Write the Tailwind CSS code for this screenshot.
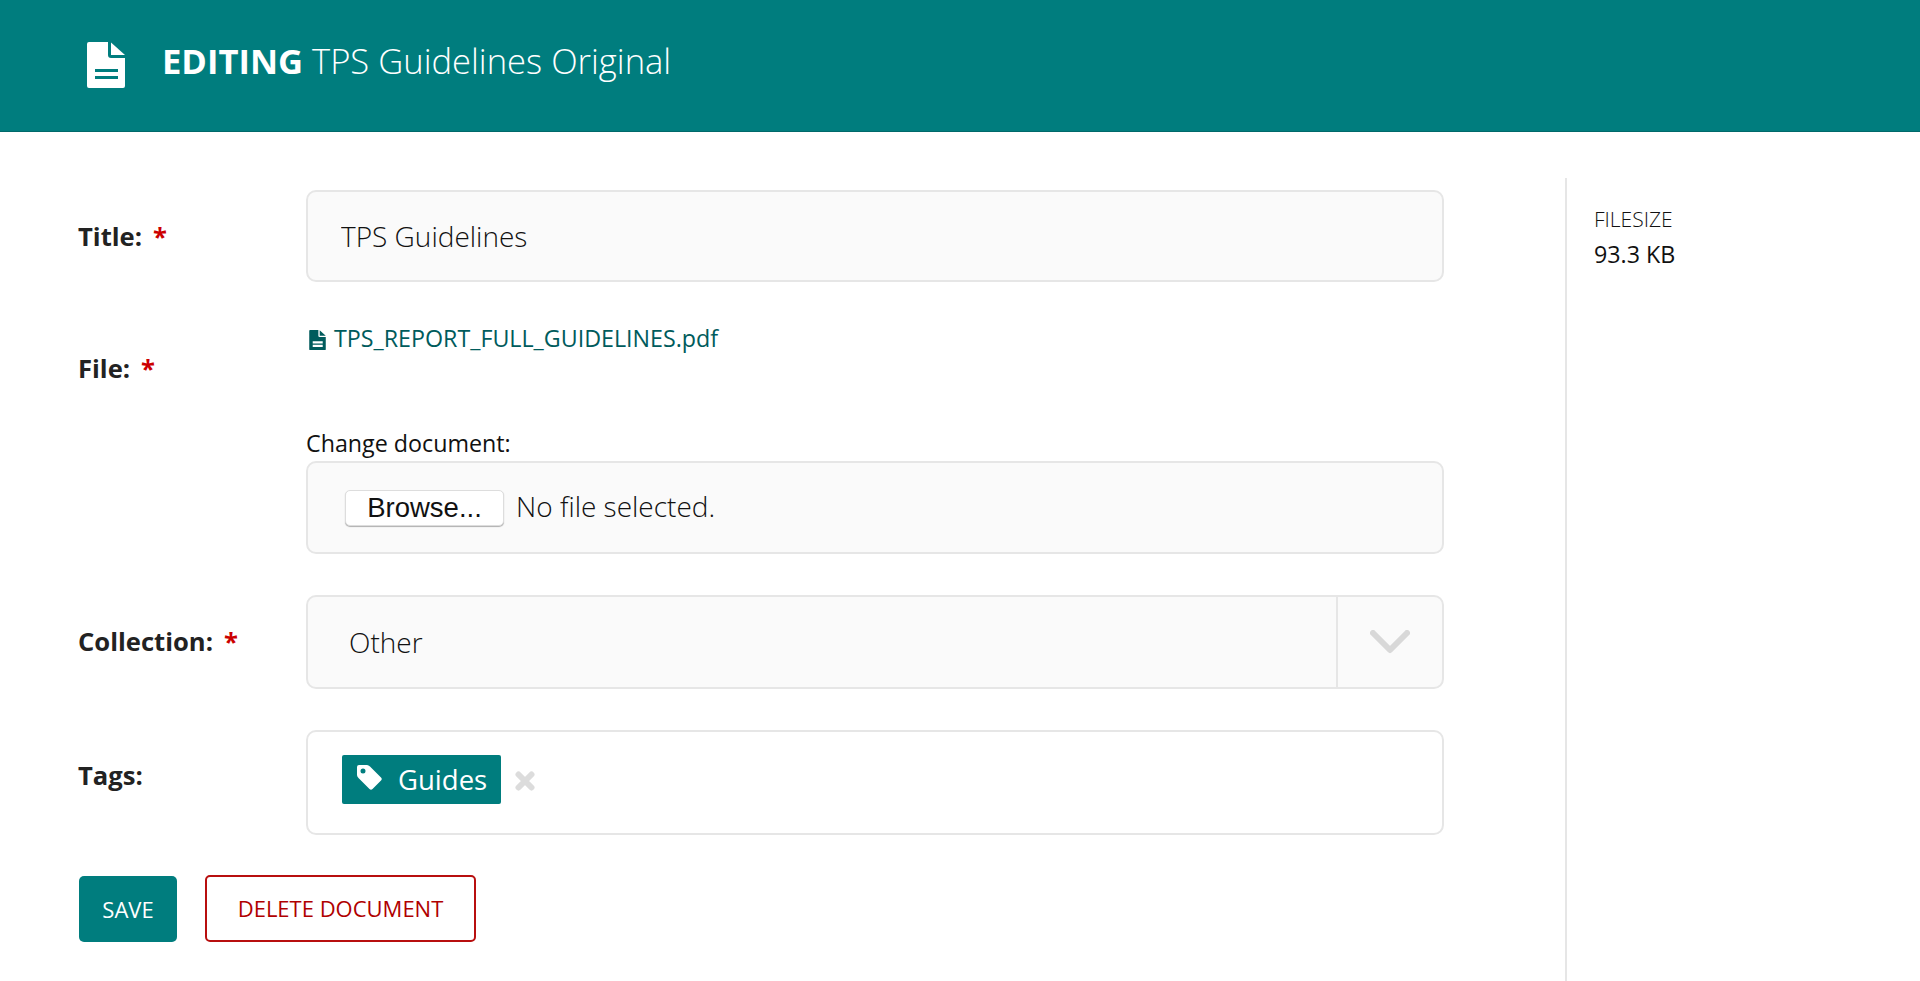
<!DOCTYPE html>
<html lang="en">

<head>
    <meta charset="UTF-8">
    <title>Editing TPS Guidelines Original</title>
    <script src="https://cdn.jsdelivr.net/npm/@tailwindcss/browser@4"></script>
</head>

<body class="h-[981px] overflow-hidden bg-white text-[#111] font-['Open_Sans',sans-serif]">
    <header class="h-[132px] bg-[#007d7e] border-b border-[#00696a] flex items-center pl-[87px] pb-[2px] text-white">
        <svg class="w-[38px] h-[46px] shrink-0" viewBox="0 0 38 46" fill="#fff">
            <path fill-rule="evenodd" d="M2 0H21V13Q21 16 24 16H38V44Q38 46 36 46H2Q0 46 0 44V2Q0 0 2 0ZM8 27V30H31V27ZM8 34V37H31V34Z" />
            <path d="M24 0.5L38 13H24Z" />
        </svg>
        <h1 class="ml-[37px] mb-[7px] text-[34.6px] leading-[48px] font-light"><span class="font-bold">EDITING</span> TPS Guidelines Original</h1>
    </header>

    <main class="mt-[46px] flex h-[803px]">
        <form class="w-[1444px] shrink-0 pl-[78px] pt-[12px]">
            <div class="flex items-center h-[92px]">
                <label class="w-[228px] shrink-0 pt-[2px] text-[25.6px] font-bold text-[#222]">Title:<span class="ml-[11px] text-[#c00]">*</span></label>
                <input type="text" value="TPS Guidelines" class="flex-1 h-[92px] px-[33px] rounded-[10px] border-2 border-[#e6e6e6] bg-[#fafafa] text-[28px] font-light text-[#111]">
            </div>

            <div class="flex mt-[41px]">
                <label class="w-[228px] shrink-0 mt-[27px] text-[25.6px] font-bold text-[#222]">File:<span class="ml-[11px] text-[#c00]">*</span></label>
                <div class="flex-1">
                    <a class="flex items-center h-[30px] pl-[3px] text-[23.25px] text-[#005b5c]">
                        <svg class="w-[17px] h-[20px] shrink-0 mt-[3px]" viewBox="0 0 38 46" fill="currentColor">
                            <path fill-rule="evenodd" d="M2 0H21V13Q21 16 24 16H38V44Q38 46 36 46H2Q0 46 0 44V2Q0 0 2 0ZM8 26V31H31V26ZM8 34V39H31V34Z" />
                            <path d="M24 0.5L38 13H24Z" />
                        </svg>
                        <span class="ml-[8px]">TPS_REPORT_FULL_GUIDELINES.pdf</span>
                    </a>
                    <div class="mt-[75px] h-[33px] text-[23.25px] leading-[30px]">Change document:</div>
                    <div class="flex items-center h-[93px] pl-[37px] rounded-[10px] border-2 border-[#e6e6e6] bg-[#fafafa]">
                        <button type="button" class="w-[159px] h-[36px] rounded-[5px] bg-white border border-[#ddd] shadow-[0_1px_1px_rgba(0,0,0,0.3)] text-[27.5px] leading-[30px] text-[#111] font-['Liberation_Sans',sans-serif]">Browse...</button>
                        <span class="ml-[12px] mb-[3px] text-[28px] font-light">No file selected.</span>
                    </div>
                </div>
            </div>

            <div class="flex items-center mt-[41px]">
                <label class="w-[228px] shrink-0 text-[25.6px] font-bold text-[#222]">Collection:<span class="ml-[11px] text-[#c00]">*</span></label>
                <div class="flex-1 flex h-[94px] rounded-[10px] border-2 border-[#e6e6e6] bg-[#fafafa]">
                    <div class="flex-1 flex items-center pl-[41px] text-[28px] font-light">Other</div>
                    <div class="w-[106px] flex items-center justify-center border-l-2 border-[#e6e6e6]">
                        <svg class="w-[40px] h-[24px]" viewBox="0 0 40 24" fill="none" stroke="#d8d8d8" stroke-width="6" stroke-linecap="round" stroke-linejoin="round">
                            <path d="M3 3L20 20L37 3" />
                        </svg>
                    </div>
                </div>
            </div>

            <div class="flex mt-[41px]">
                <label class="w-[228px] shrink-0 pt-[27px] text-[25.6px] font-bold text-[#222]">Tags:</label>
                <div class="flex-1 flex items-center h-[105px] pl-[34px] rounded-[10px] border-2 border-[#e6e6e6] bg-white">
                    <span class="flex items-center w-[159px] h-[49px] mb-[6px] pl-[15px] rounded-[2px] bg-[#007d7e] text-white text-[27.5px]">
                        <svg class="w-[25px] h-[25px] shrink-0 mb-[4px]" viewBox="0 0 25 25" fill="#fff">
                            <path fill-rule="evenodd" d="M2 0H10Q11.500 0 13 1.500L24 12.500Q25.500 14 24 15.500L15.500 24Q14 25.500 12.500 24L1.500 13Q0 11.500 0 10V2Q0 0 2 0ZM6 3.500A2.500 2.500 0 1 0 6 8.500A2.500 2.500 0 1 0 6 3.500Z" />
                        </svg>
                        <span class="ml-[16px]">Guides</span>
                    </span>
                    <svg class="ml-[14px] mb-[3px] w-[20px] h-[20px]" viewBox="0 0 20 20" fill="none" stroke="#dcdcdc" stroke-width="6" stroke-linecap="round">
                        <path d="M3.500 3.500L16.500 16.500M16.500 3.500L3.500 16.500" />
                    </svg>
                </div>
            </div>

            <div class="flex items-end mt-[40px] ml-[1px]">
                <button type="button" class="w-[98px] h-[66px] rounded-[5px] bg-[#007d7e] text-white text-[22px]">SAVE</button>
                <button type="button" class="ml-[28px] w-[271px] h-[67px] rounded-[5px] border-2 border-[#b80f0f] bg-white text-[#b00000] text-[22px]">DELETE DOCUMENT</button>
            </div>
        </form>

        <aside class="ml-[121px] flex-1 border-l-2 border-[#e6e6e6] pl-[27px] pt-[26px]">
            <div class="text-[21px] leading-[30px] font-light">FILESIZE</div>
            <div class="mt-[5px] text-[23.25px] leading-[30px]">93.3 KB</div>
        </aside>
    </main>
</body>

</html>
